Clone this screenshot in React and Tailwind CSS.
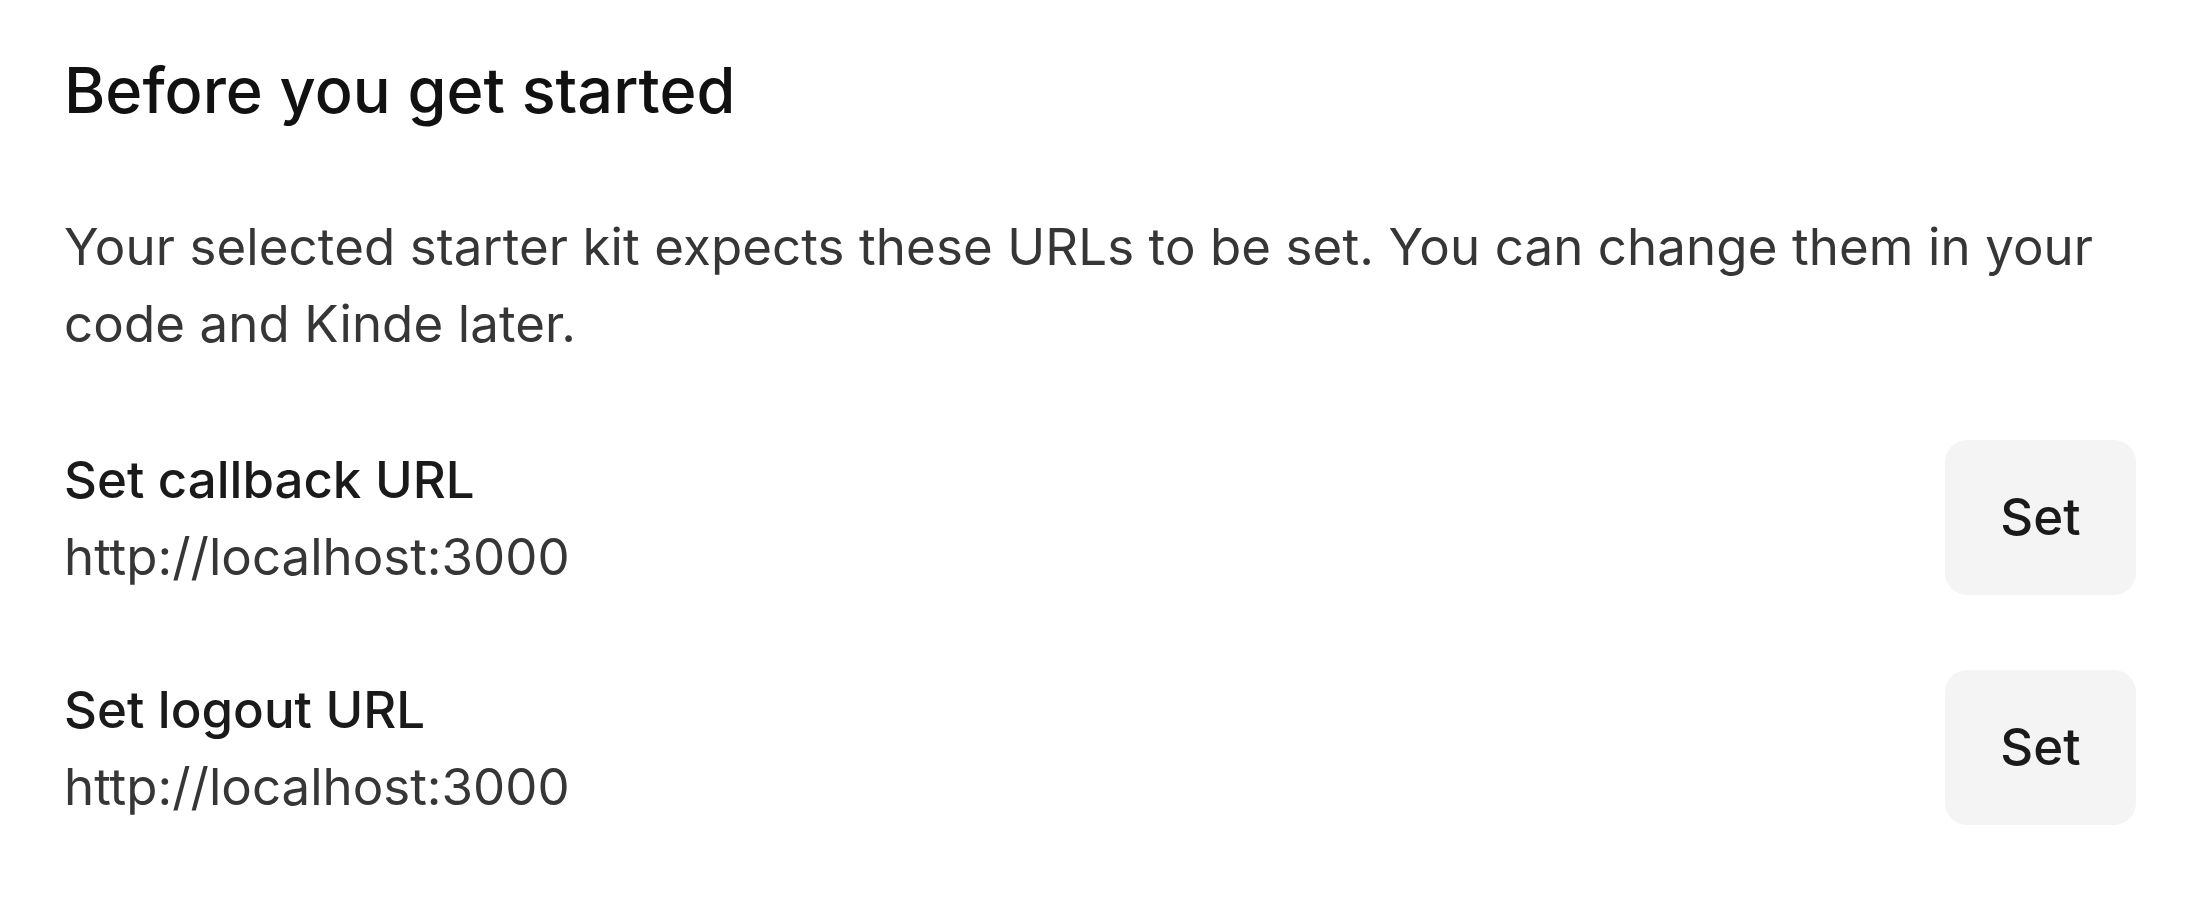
export default function App() {
  const rows = [
    { label: "Set callback URL", url: "http://localhost:3000" },
    { label: "Set logout URL", url: "http://localhost:3000" },
  ];
  return (
    <div className="min-h-[907px] w-full bg-white px-16 pt-[52px] font-['Inter',sans-serif]">
      <div className="flex flex-col">
        <h1 className="text-[63px] leading-[76px] font-medium text-[#111111]">
          Before you get started
        </h1>
        <p className="mt-[80px] text-[51px] leading-[77px] tracking-[0.1px] text-[#363636]">
          Your selected starter kit expects these URLs to be set. You can change them in your code and Kinde later.
        </p>
        <div className="mt-[78px] flex flex-col gap-[75px]">
          {rows.map((r) => (
            <div key={r.label} className="flex items-center justify-between">
              <div className="flex flex-col">
                <span className="text-[51px] leading-[77px] font-medium text-[#1a1a1a]">{r.label}</span>
                <span className="text-[51px] leading-[77px] text-[#363636]">{r.url}</span>
              </div>
              <button className="flex h-[155px] w-[191px] items-center justify-center rounded-[22px] bg-[#f4f4f4] text-[51px] font-medium text-[#1a1a1a]">
                Set
              </button>
            </div>
          ))}
        </div>
      </div>
    </div>
  );
}
